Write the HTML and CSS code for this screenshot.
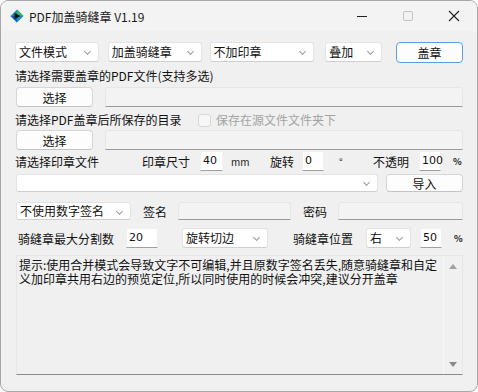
FILE: index.html
```html
<!DOCTYPE html>
<html lang="zh-CN">
<head>
  <meta charset="UTF-8" />
  <title>PDF加盖骑缝章 V1.19</title>
  <link rel="stylesheet" href="styles.css">
</head>
<body>

  <div class="window">
    <div class="titlebar">
      <svg class="app-icon" width="14" height="14" viewBox="0 0 14 14">
        <path d="M7 0.5 L13.5 7 L7 13.5 L0.5 7 Z" fill="#1b8fb0"/>
        <path d="M7 0.5 L13.5 7 L7 7 Z" fill="#3db36b"/>
        <path d="M0.5 7 L7 13.5 L7 7 Z" fill="#1a5fc0"/>
        <path d="M4.5 4 L10.5 7 L4.5 10 Z" fill="#111"/>
      </svg>
      <span class="title">PDF加盖骑缝章 V1.19</span>
      <div class="caption">
        <span class="cap">
          <svg width="12" height="12" viewBox="0 0 12 12"><path d="M1 6.5 H11" stroke="#222" stroke-width="1"/></svg>
        </span>
        <span class="cap">
          <svg width="12" height="12" viewBox="0 0 12 12"><rect x="1.5" y="1.5" width="9" height="9" rx="1.5" fill="none" stroke="#c4c4c4"/></svg>
        </span>
        <span class="cap">
          <svg width="12" height="12" viewBox="0 0 12 12"><path d="M1 1 L11 11 M11 1 L1 11" stroke="#222" stroke-width="1.1"/></svg>
        </span>
      </div>
    </div>

    <div class="content">
      <div class="row row-mode">
        <div class="combo w84">文件模式<i class="arrow"></i></div>
        <div class="combo w94 ml9">加盖骑缝章<i class="arrow"></i></div>
        <div class="combo w105 ml8">不加印章<i class="arrow"></i></div>
        <div class="combo w57 ml11">叠加<i class="arrow"></i></div>
        <button class="btn btn-default ml14">盖章</button>
      </div>

      <div class="label-row">请选择需要盖章的PDF文件(支持多选)</div>
      <div class="row row-pick">
        <button class="btn btn-pick">选择</button>
        <div class="field flat grow"></div>
      </div>

      <div class="label-row label-save">
        <span class="w183">请选择PDF盖章后所保存的目录</span>
        <label class="check"><span class="box"></span>保存在源文件文件夹下</label>
      </div>
      <div class="row row-pick row-save">
        <button class="btn btn-pick">选择</button>
        <div class="field flat grow"></div>
      </div>

      <div class="row row-stamp">
        <span>请选择印章文件</span>
        <span>印章尺寸</span>
        <div class="num">40</div>
        <span class="unit mm">mm</span>
        <span>旋转</span>
        <div class="num">0</div>
        <span class="unit deg">°</span>
        <span>不透明</span>
        <div class="num">100</div>
        <span class="unit pct">%</span>
      </div>

      <div class="row row-file">
        <div class="combo edit w363"><i class="arrow"></i></div>
        <button class="btn btn-import">导入</button>
      </div>

      <div class="row row-sign">
        <div class="combo w115">不使用数字签名<i class="arrow"></i></div>
        <span class="sign-label">签名</span>
        <div class="field flat w113"></div>
        <span class="pass-label">密码</span>
        <div class="field flat grow"></div>
      </div>

      <div class="row row-split">
        <span class="split-label">骑缝章最大分割数</span>
        <div class="num w32">20</div>
        <div class="combo w86 ml24">旋转切边<i class="arrow"></i></div>
        <span class="pos-label">骑缝章位置</span>
        <div class="combo w45">右<i class="arrow"></i></div>
        <div class="num ml9">50</div>
        <span class="unit pct">%</span>
      </div>

      <div class="memo">
        <div class="memo-text">提示:使用合并模式会导致文字不可编辑,并且原数字签名丢失,随意骑缝章和自定<br>义加印章共用右边的预览定位,所以同时使用的时候会冲突,建议分开盖章</div>
        <div class="scrollbar">
          <svg width="8" height="5" viewBox="0 0 8 5"><path d="M0 5 L4 0 L8 5 Z" fill="#a0a0a0"/></svg>
          <svg width="8" height="5" viewBox="0 0 8 5"><path d="M0 0 L4 5 L8 0 Z" fill="#8a8a8a"/></svg>
        </div>
      </div>
    </div>
  </div>

</body>
</html>
```

FILE: styles.css
```css
body {
  margin: 0;
  background-color: #ffffff;
  font-family: "Noto Sans CJK SC", "Liberation Sans", sans-serif;
  font-size: 12px;
  color: #111;
}

.window {
  box-sizing: border-box;
  width: 478px;
  height: 392px;
  border: 1px solid #a8a8a8;
  border-radius: 8px;
  background-color: #f0f0f0;
  overflow: hidden;
}

/* title bar */
.titlebar {
  height: 30px;
  display: flex;
  align-items: center;
  background-color: #f3f3f3;
}

.app-icon {
  margin-left: 9px;
}

.title {
  margin-left: 5px;
  font-family: "Noto Sans CJK SC", sans-serif;
  font-size: 12px;
  color: #1a1a1a;
}

.caption {
  margin-left: auto;
  display: flex;
}

.cap {
  width: 46px;
  height: 30px;
  display: flex;
  align-items: center;
  justify-content: center;
}

/* content */
.content {
  padding: 0 14px 0 14px;
}

.row {
  display: flex;
  align-items: center;
}

.row-mode {
  margin-top: 10px;
  height: 21px;
}

.label-row {
  display: flex;
  align-items: center;
  height: 14px;
  line-height: 14px;
  margin-top: 7px;
}

.label-save {
  margin-top: 6px;
}

.row-pick {
  margin-top: 4px;
  height: 20px;
}

.row-save {
  margin-top: 3px;
}

.row-stamp {
  display: grid;
  grid-template-columns: 127px 58px 23px 47px 32px 22px 49px 46px 22px auto;
  margin-top: 1px;
  height: 20px;
}

.row-file {
  margin-top: 3px;
  height: 18px;
}

.row-sign {
  margin-top: 10px;
  height: 18px;
}

.row-split {
  margin-top: 8px;
  height: 20px;
}

/* widgets */
.combo {
  box-sizing: border-box;
  position: relative;
  height: 20px;
  line-height: 18px;
  padding-left: 3px;
  background-color: #ffffff;
  border: 1px solid #e3e3e3;
  border-bottom-color: #cfcfcf;
  border-radius: 3px;
  white-space: nowrap;
}

.arrow {
  position: absolute;
  right: 8px;
  top: 6px;
  width: 4px;
  height: 4px;
  border-right: 1px solid #9a9a9a;
  border-bottom: 1px solid #9a9a9a;
  transform: rotate(45deg);
}

.combo.edit {
  height: 18px;
  margin-left: 1px;
}

.combo.edit .arrow {
  top: 5px;
}

.btn {
  box-sizing: border-box;
  height: 20px;
  padding: 0;
  font-family: inherit;
  font-size: 12px;
  color: #111;
  background-color: #fdfdfd;
  border: 1px solid #d6d6d6;
  border-bottom-color: #c4c4c4;
  border-radius: 4px;
}

.btn-default {
  width: 67px;
  height: 21px;
  margin-top: 2px;
  border: 1px solid #5a9fdf;
}

.btn-pick {
  width: 77px;
  margin-left: 1px;
}

.btn-import {
  width: 77px;
  height: 18px;
  margin-left: 8px;
}

.field {
  box-sizing: border-box;
  height: 19px;
}

.flat {
  background-color: #f3f3f3;
  border: 1px solid #e6e6e6;
  border-bottom: 1px solid #9a9a9a;
  border-radius: 3px 3px 0 0;
}

.row-pick .field {
  margin-left: 12px;
  height: 20px;
}

.row-sign .field {
  height: 18px;
}

.grow {
  flex: 1;
}

.num {
  box-sizing: border-box;
  width: 22px;
  height: 20px;
  line-height: 18px;
  padding-left: 2px;
  background-color: #ffffff;
  border: 1px solid #f0f0f0;
  border-bottom: 1px solid #a0a0a0;
  font-family: "DejaVu Sans", sans-serif;
  font-size: 11px;
}

.row-stamp .num:first-of-type {
  width: 23px;
}

.unit {
  font-size: 10px;
  color: #222;
}

.mm {
  padding-left: 8px;
}

.deg {
  padding-left: 15px;
}

.pct {
  padding-left: 12px;
  font-weight: bold;
  font-size: 9px;
}

.check {
  display: flex;
  align-items: center;
  color: #a3a3a3;
}

.box {
  box-sizing: border-box;
  width: 13px;
  height: 13px;
  margin-right: 5px;
  border: 1px solid #d8d8d8;
  border-radius: 3px;
  background-color: #f7f7f7;
}

.sign-label {
  margin-left: 12px;
  width: 35px;
}

.pass-label {
  margin-left: 12px;
  width: 35px;
}

.split-label {
  margin-left: 3px;
  width: 108px;
}

.pos-label {
  margin-left: 25px;
  width: 73px;
}

/* widths and offsets */
.w32 { width: 32px; }
.w45 { width: 45px; }
.w57 { width: 57px; }
.w84 { width: 84px; }
.w86 { width: 86px; }
.w94 { width: 94px; }
.w105 { width: 105px; }
.w113 { width: 113px; }
.w115 { width: 115px; }
.w183 { width: 183px; }
.w363 { width: 363px; }

.ml8 { margin-left: 8px; }
.ml9 { margin-left: 9px; }
.ml11 { margin-left: 11px; }
.ml14 { margin-left: 14px; }
.ml24 { margin-left: 24px; }

.row-sign .combo {
  margin-left: 1px;
  height: 18px;
  line-height: 16px;
}

/* memo */
.memo {
  box-sizing: border-box;
  display: flex;
  margin: 7px 0 0 1px;
  height: 120px;
  background-color: #f0f0f0;
  border: 1px solid #e6e6e6;
  border-bottom: 1px solid #8a8a8a;
}

.memo-text {
  flex: 1;
  padding: 2px 0 0 2px;
  line-height: 14px;
  white-space: nowrap;
  overflow: hidden;
  color: #111;
}

.scrollbar {
  width: 18px;
  display: flex;
  flex-direction: column;
  justify-content: space-between;
  align-items: center;
  padding: 8px 0 7px;
  border-left: 1px solid #f8f8f8;
}
```
